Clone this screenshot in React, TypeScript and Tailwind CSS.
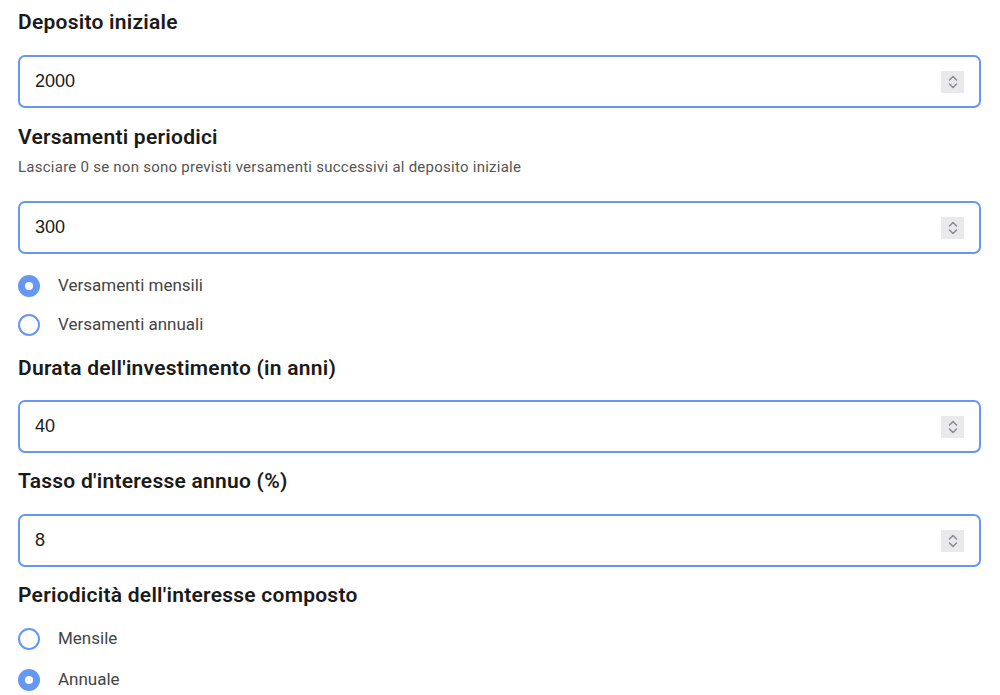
import React from "react";

const headFont = { fontFamily: "Roboto, 'Noto Sans', sans-serif" };

function Spinner() {
  return (
    <div className="flex h-[22px] w-[23px] flex-col items-center justify-center bg-[#e9e9ed]">
      <svg width="12" height="16" viewBox="0 0 12 16" fill="none" stroke="#8a8a90" strokeWidth="1.5" strokeLinecap="round" strokeLinejoin="round">
        <path d="M2.5 6 L6 2.5 L9.5 6" />
        <path d="M2.5 10 L6 13.5 L9.5 10" />
      </svg>
    </div>
  );
}

function NumberField({ value }: { value: string }) {
  return (
    <div className="flex h-[53px] items-center justify-between rounded-[7px] border-2 border-[#6597f3] bg-white pl-[15px] pr-[15px]">
      <span className="text-[18px] text-[#1a1a1a]" style={{ fontFamily: "'Liberation Sans', Arial, sans-serif" }}>{value}</span>
      <Spinner />
    </div>
  );
}

function Heading({ children }: { children: React.ReactNode }) {
  return (
    <h2 className="text-[21px] font-semibold leading-[28px] tracking-[0.25px] text-[#1a1a1a]" style={headFont}>
      {children}
    </h2>
  );
}

function Radio({ checked, label, h = "h-[39px]" }: { checked: boolean; label: string; h?: string }) {
  return (
    <div className={"flex items-center gap-[18px] " + h}>
      {checked ? (
        <div className="flex h-[22px] w-[22px] items-center justify-center rounded-full bg-[#6597f3]">
          <div className="h-[8px] w-[8px] rounded-full bg-white" />
        </div>
      ) : (
        <div className="h-[22px] w-[22px] rounded-full border-2 border-[#6597f3] bg-white" />
      )}
      <span className="text-[17px] text-[#444]" style={headFont}>{label}</span>
    </div>
  );
}

export default function App() {
  return (
    <div className="min-h-[695px] bg-white pl-[18px] pr-[19px]">
      <div className="pt-[8px]">
        <Heading>Deposito iniziale</Heading>
      </div>
      <div className="mt-[19px]">
        <NumberField value="2000" />
      </div>
      <div className="mt-[15px]">
        <Heading>Versamenti periodici</Heading>
      </div>
      <p className="mt-[6px] text-[15px] leading-[20px] tracking-[0.25px] text-[#555]" style={headFont}>
        Lasciare 0 se non sono previsti versamenti successivi al deposito iniziale
      </p>
      <div className="mt-[24px]">
        <NumberField value="300" />
      </div>
      <div className="mt-[12px]">
        <Radio checked label="Versamenti mensili" />
        <Radio checked={false} label="Versamenti annuali" />
      </div>
      <div className="mt-[10px]">
        <Heading>Durata dell'investimento (in anni)</Heading>
      </div>
      <div className="mt-[18px]">
        <NumberField value="40" />
      </div>
      <div className="mt-[14px]">
        <Heading>Tasso d'interesse annuo (%)</Heading>
      </div>
      <div className="mt-[19px]">
        <NumberField value="8" />
      </div>
      <div className="mt-[14px]">
        <Heading>Periodicità dell'interesse composto</Heading>
      </div>
      <div className="mt-[9px]">
        <Radio checked={false} label="Mensile" h="h-[41px]" />
        <Radio checked label="Annuale" h="h-[41px]" />
      </div>
    </div>
  );
}
